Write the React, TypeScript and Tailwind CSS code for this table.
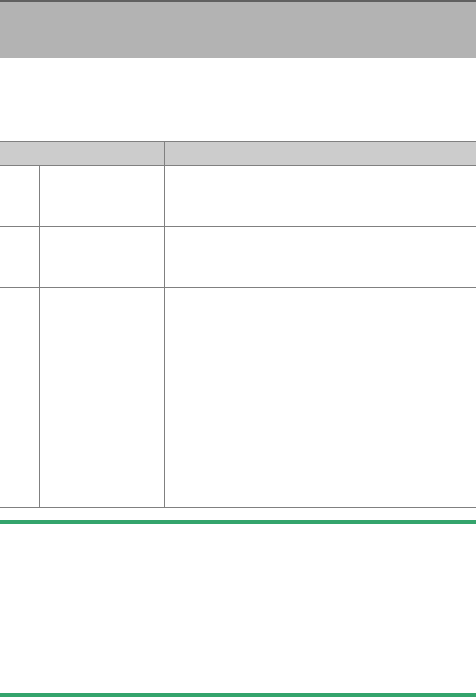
export default function App() {
  const rows = [60, 60, 219];
  return (
    <div className="w-[476px] h-[698px] bg-white font-['Liberation_Sans',sans-serif]">
      <div className="h-[58px] border-t-2 border-[#606060] bg-[#b3b3b3]" />
      <div className="mt-[83px] border-t border-[#808080]">
        <div className="grid grid-cols-[165px_1fr] h-[24px] bg-[#cccccc] border-b border-[#808080]">
          <div className="border-r border-[#808080]" />
          <div />
        </div>
        {rows.map((h, i) => (
          <div
            key={i}
            className="grid grid-cols-[40px_125px_1fr] border-b border-[#808080]"
            style={{ height: h + 1 }}
          >
            <div className="border-r border-[#808080]" />
            <div className="border-r border-[#808080]" />
            <div />
          </div>
        ))}
      </div>
      <div className="mt-[12px] h-[4px] bg-[#34a46c]" />
      <div className="mt-[169px] h-[4px] bg-[#34a46c]" />
    </div>
  );
}
